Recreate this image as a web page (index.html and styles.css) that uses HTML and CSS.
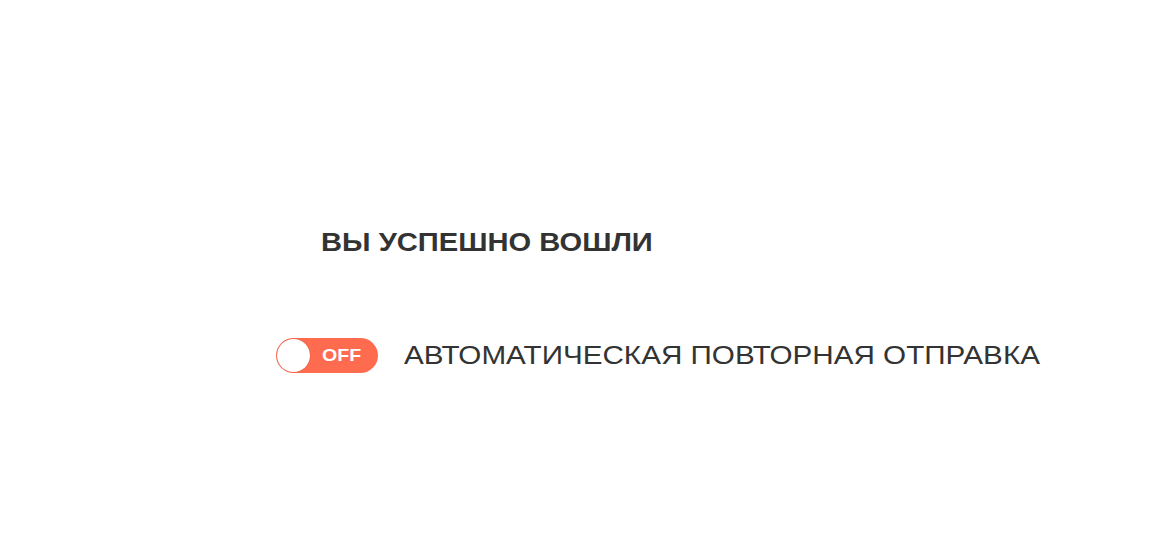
FILE: index.html
```html
<!DOCTYPE html>
<html lang="ru">
<head>
<meta charset="utf-8">
<link rel="stylesheet" href="styles.css">
</head>
<body>
<main class="page">
  <h1 class="title"><span class="stretch">ВЫ УСПЕШНО ВОШЛИ</span></h1>
  <div class="row">
    <div class="toggle">
      <span class="knob"></span>
      <span class="toggle-text">OFF</span>
    </div>
    <span class="label">АВТОМАТИЧЕСКАЯ ПОВТОРНАЯ ОТПРАВКА</span>
  </div>
</main>
</body>
</html>
```
FILE: styles.css
```css
html, body {
  margin: 0;
  padding: 0;
  background: #ffffff;
}
body {
  font-family: "Liberation Sans", Arial, sans-serif;
  color: #333333;
  width: 1162px;
  height: 558px;
  overflow: hidden;
}
.page {
  padding-top: 226px;
  display: flex;
  flex-direction: column;
}
.title {
  margin: 0 0 0 321px;
  font-size: 25px;
  font-weight: bold;
  line-height: 32px;
  color: #333333;
}
.stretch {
  display: inline-block;
  transform: scaleX(1.165);
  transform-origin: left center;
}
.row {
  margin-top: 80px;
  margin-left: 276px;
  display: flex;
  align-items: center;
  gap: 26px;
}
.toggle {
  width: 102px;
  height: 35px;
  border-radius: 18px;
  background: #ff6b4f;
  display: flex;
  align-items: center;
  box-sizing: border-box;
  padding: 1px;
}
.knob {
  width: 33px;
  height: 33px;
  border-radius: 50%;
  background: #ffffff;
  box-shadow: 0 0 1px rgba(0,0,0,0.3);
}
.toggle-text {
  display: inline-block;
  color: #ffffff;
  font-weight: bold;
  font-size: 17px;
  margin-left: 12px;
  transform: scaleX(1.15);
  transform-origin: left center;
}
.label {
  display: inline-block;
  font-size: 26px;
  color: #333333;
  transform: scaleX(1.14);
  transform-origin: left center;
}
```
